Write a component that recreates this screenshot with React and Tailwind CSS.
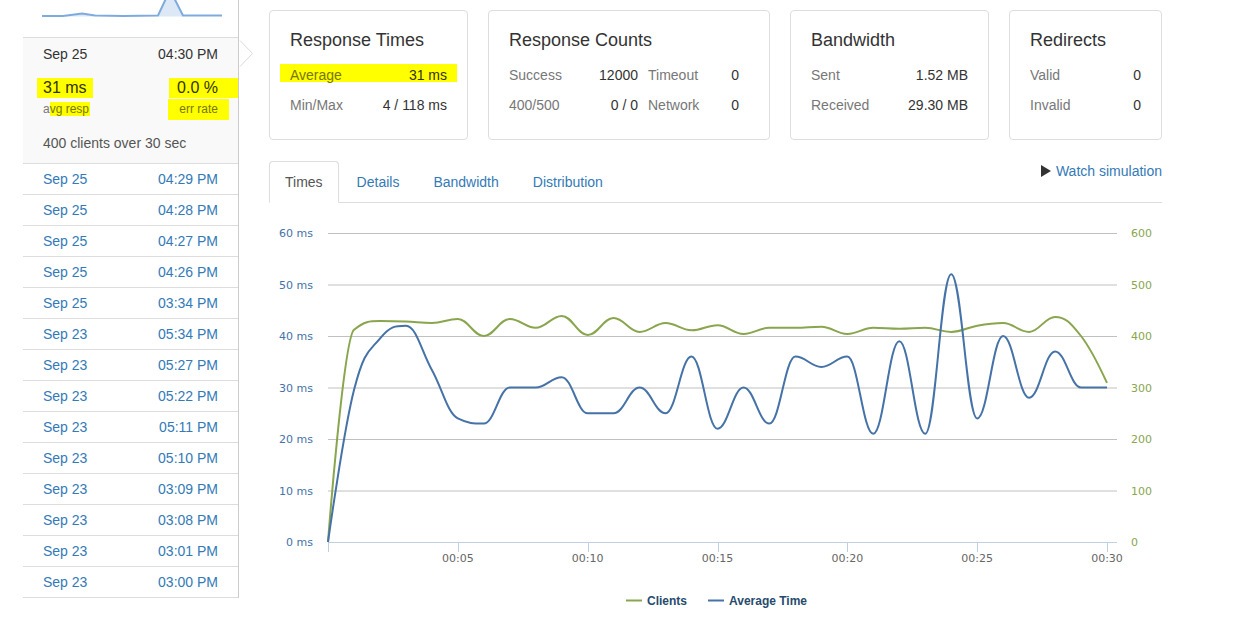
import React from "react";

// chart geometry (svg coords: page x - 269, page y - 203)
const X0 = 59;
const X1 = 838;
const Y0 = 339;
const Y60 = 30;
const px = (t) => X0 + (t * (X1 - X0)) / 30;
const pyMs = (ms) => Y0 - (ms * (Y0 - Y60)) / 60;
const pyClients = (v) => Y0 - (v * (Y0 - Y60)) / 600;

const avgTime = [0, 29.5, 39.5, 42, 33.4, 24, 23, 30, 30, 32, 25, 25, 30, 25, 36, 22, 30, 23, 36, 34, 36, 21, 39, 21, 52, 24, 40, 28, 37, 30, 30];
const clients = [0, 412, 429, 428, 425, 433, 400, 433, 416, 439, 402, 435, 408, 425, 411, 421, 404, 416, 416, 418, 404, 416, 414, 416, 408, 420, 425, 408, 437, 400, 309];

// highcharts-style spline
function spline(pts) {
  const sm = 1.5;
  const den = 2.5;
  const last = pts.length - 1;
  const conts = pts.map((p, i) => {
    if (i === 0 || i === last) return null;
    const [x, y] = p;
    const [lx, ly] = pts[i - 1];
    const [nx, ny] = pts[i + 1];
    const lcx = (sm * x + lx) / den;
    let lcy = (sm * y + ly) / den;
    const rcx = (sm * x + nx) / den;
    let rcy = (sm * y + ny) / den;
    const corr = ((rcy - lcy) * (rcx - x)) / (rcx - lcx) + y - rcy;
    lcy += corr;
    rcy += corr;
    if (lcy > ly && lcy > y) {
      lcy = Math.max(ly, y);
      rcy = 2 * y - lcy;
    } else if (lcy < ly && lcy < y) {
      lcy = Math.min(ly, y);
      rcy = 2 * y - lcy;
    }
    if (rcy > ny && rcy > y) {
      rcy = Math.max(ny, y);
      lcy = 2 * y - rcy;
    } else if (rcy < ny && rcy < y) {
      rcy = Math.min(ny, y);
      lcy = 2 * y - rcy;
    }
    return { lcx, lcy, rcx, rcy };
  });
  let d = `M${pts[0][0]},${pts[0][1]}`;
  for (let i = 1; i <= last; i++) {
    const prev = conts[i - 1];
    const cur = conts[i];
    const c1 = prev ? [prev.rcx, prev.rcy] : pts[i - 1];
    const c2 = cur ? [cur.lcx, cur.lcy] : pts[i];
    d += ` C${c1[0].toFixed(1)},${c1[1].toFixed(1)} ${c2[0].toFixed(1)},${c2[1].toFixed(1)} ${pts[i][0].toFixed(1)},${pts[i][1].toFixed(1)}`;
  }
  return d;
}

const runs = [
  ["Sep 25", "04:29 PM"],
  ["Sep 25", "04:28 PM"],
  ["Sep 25", "04:27 PM"],
  ["Sep 25", "04:26 PM"],
  ["Sep 25", "03:34 PM"],
  ["Sep 23", "05:34 PM"],
  ["Sep 23", "05:27 PM"],
  ["Sep 23", "05:22 PM"],
  ["Sep 23", "05:11 PM"],
  ["Sep 23", "05:10 PM"],
  ["Sep 23", "03:09 PM"],
  ["Sep 23", "03:08 PM"],
  ["Sep 23", "03:01 PM"],
  ["Sep 23", "03:00 PM"],
];

const Card = ({ title, width, children }) => (
  <div className={`${width} h-[130px] border border-[#ddd] rounded-[4px] bg-white pt-[19px] px-[20px]`}>
    <div className="text-[18px] leading-[20px] text-[#333] mb-[10px]">{title}</div>
    {children}
  </div>
);

const Row = ({ label, value, highlight }) => (
  <div
    className={`h-[30px] flex items-center justify-between ${
      highlight ? "relative" : ""
    }`}
  >
    {highlight && <div className="absolute -left-[10px] -right-[10px] top-[4px] h-[18px] bg-[#ffff00]" />}
    <span className={`relative ${highlight ? "text-[#777700]" : "text-[#777]"}`}>{label}</span>
    <span className={`relative ${highlight ? "text-[#333300]" : "text-[#333]"}`}>{value}</span>
  </div>
);

const Sparkline = () => (
  <svg width="215" height="37" className="block">
    <path
      d="M19,16.5 L40,16.5 L59,14 L72,16.5 L135,16.5 L147,-10 L160,16.5 L199,16.5 Z"
      fill="#dce8f6"
    />
    <path
      d="M19,16 L40,16 L59,13.5 L72,15.5 L100,16 L135,15.5 L147,-10 L160,15.5 L199,15.5"
      fill="none"
      stroke="#7eabdd"
      strokeWidth="2"
    />
  </svg>
);

const Chart = () => {
  const bluePts = avgTime.map((v, i) => [px(i), pyMs(v)]);
  const greenPts = clients.map((v, i) => [px(i), pyClients(v)]);
  const grid = [10, 20, 30, 40, 50, 60];
  return (
    <svg width="893" height="425" className="block" style={{ fontFamily: "'DejaVu Sans', Verdana, sans-serif" }}>
      {grid.map((g) => (
        <line key={g} x1={X0} x2={848} y1={pyMs(g) + 0.5} y2={pyMs(g) + 0.5} stroke="#c0c0c0" strokeWidth="1" />
      ))}
      <line x1={X0} x2={848} y1={Y0 + 0.5} y2={Y0 + 0.5} stroke="#c0d0e0" strokeWidth="1" />
      {[0, 5, 10, 15, 20, 25, 30].map((t) => (
        <line key={t} x1={Math.round(px(t)) + 0.5} x2={Math.round(px(t)) + 0.5} y1={Y0} y2={Y0 + 10} stroke="#c0d0e0" strokeWidth="1" />
      ))}
      {[0, 10, 20, 30, 40, 50, 60].map((g) => (
        <text key={g} x={44} y={pyMs(g) + 4} textAnchor="end" fontSize="11" fill="#4572a7">
          {g} ms
        </text>
      ))}
      {[0, 100, 200, 300, 400, 500, 600].map((g) => (
        <text key={g} x={862} y={pyClients(g) + 4} fontSize="11" fill="#89a54e">
          {g}
        </text>
      ))}
      {[5, 10, 15, 20, 25, 30].map((t) => (
        <text key={t} x={px(t)} y={359} textAnchor="middle" fontSize="11" fill="#666">
          00:{String(t).padStart(2, "0")}
        </text>
      ))}
      <path d={spline(greenPts)} fill="none" stroke="#89a54e" strokeWidth="2" strokeLinejoin="round" />
      <path d={spline(bluePts)} fill="none" stroke="#4572a7" strokeWidth="2" strokeLinejoin="round" />
      {/* legend */}
      <g style={{ fontFamily: "'Liberation Sans', Arial, sans-serif" }} fontSize="12" fontWeight="bold" fill="#274b6d">
        <line x1="357" x2="373" y1="397.5" y2="397.5" stroke="#89a54e" strokeWidth="2" />
        <text x="378" y="402">Clients</text>
        <line x1="439" x2="455" y1="397.5" y2="397.5" stroke="#4572a7" strokeWidth="2" />
        <text x="460" y="402">Average Time</text>
      </g>
    </svg>
  );
};

export default function App() {
  return (
    <div className="min-h-screen bg-white flex items-start font-['Liberation_Sans',Arial,sans-serif] text-[14px] text-[#333]">
      {/* run list */}
      <aside className="ml-[23px] w-[216px] shrink-0 border-r border-[#ccc]">
        <div className="h-[37px] overflow-hidden">
          <Sparkline />
        </div>
        <div className="relative h-[126px] bg-[#f9f9f9] border-t border-[#ddd] px-[20px] pt-[6px]">
          <svg width="15" height="28" className="absolute left-[216px] top-[2px]">
            <polyline points="1,0.5 13.5,13.5 1,26.5" fill="white" stroke="#dadada" strokeWidth="1" />
          </svg>
          <div className="flex justify-between leading-[20px]">
            <span>Sep 25</span>
            <span>04:30 PM</span>
          </div>
          <div className="flex justify-between mt-[14px] text-[16px] leading-[20px]">
            <span className="bg-[#ffff00] -ml-[6px] pl-[6px] pr-[6px] text-[#333300]">31 ms</span>
            <span className="bg-[#ffff00] pl-[8px] -mr-[20px] pr-[20px] text-[#333300]">0.0 %</span>
          </div>
          <div className="flex justify-between mt-[3px] text-[12px] leading-[16px] text-[#777]">
            <span>
              a<span className="bg-[#ffff00] pr-[1px] text-[#777700]">vg resp</span>
            </span>
            <span className="bg-[#ffff00] -mr-[11px] pl-[11px] pr-[11px] pt-[2px] pb-[3px] -mt-[2px] text-[#777700]">err rate</span>
          </div>
          <div className="mt-[13px] leading-[20px] text-[#555]">400 clients over 30 sec</div>
        </div>
        {runs.map(([d, t], i) => (
          <div
            key={i}
            className={`h-[31px] border-t border-[#ddd] px-[20px] flex items-center justify-between leading-[30px] text-[#337ab7] ${
              i === runs.length - 1 ? "border-b h-[32px]" : ""
            }`}
          >
            <span>{d}</span>
            <span>{t}</span>
          </div>
        ))}
      </aside>

      {/* main */}
      <main className="ml-[30px] w-[893px] shrink-0 pt-[10px]">
        <div className="flex gap-[20px]">
          <Card title="Response Times" width="w-[199px]">
            <Row label="Average" value="31 ms" highlight />
            <Row label="Min/Max" value="4 / 118 ms" />
          </Card>
          <Card title="Response Counts" width="w-[282px]">
            <div className="h-[30px] flex items-center">
              <div className="w-[129px] flex justify-between">
                <span className="text-[#777]">Success</span>
                <span>12000</span>
              </div>
              <div className="ml-[10px] w-[91px] flex justify-between">
                <span className="text-[#777]">Timeout</span>
                <span>0</span>
              </div>
            </div>
            <div className="h-[30px] flex items-center">
              <div className="w-[129px] flex justify-between">
                <span className="text-[#777]">400/500</span>
                <span>0 / 0</span>
              </div>
              <div className="ml-[10px] w-[91px] flex justify-between">
                <span className="text-[#777]">Network</span>
                <span>0</span>
              </div>
            </div>
          </Card>
          <Card title="Bandwidth" width="w-[199px]">
            <Row label="Sent" value="1.52 MB" />
            <Row label="Received" value="29.30 MB" />
          </Card>
          <Card title="Redirects" width="w-[153px]">
            <Row label="Valid" value="0" />
            <Row label="Invalid" value="0" />
          </Card>
        </div>

        <div className="relative mt-[21px]">
          <a className="absolute right-0 top-0 flex items-center leading-[20px] text-[#337ab7] cursor-pointer">
            <svg width="10" height="12" className="mr-[5px]">
              <polygon points="0,0 10,6 0,12" fill="#333" />
            </svg>
            Watch simulation
          </a>
          <ul className="flex border-b border-[#ddd]">
            {["Times", "Details", "Bandwidth", "Distribution"].map((t, i) => (
              <li key={t} className="-mb-[1px] mr-[2px]">
                <a
                  className={`block px-[15px] py-[10px] leading-[20px] border rounded-t-[4px] ${
                    i === 0
                      ? "border-[#ddd] border-b-transparent bg-white text-[#555]"
                      : "border-transparent text-[#337ab7]"
                  }`}
                >
                  {t}
                </a>
              </li>
            ))}
          </ul>
          <Chart />
        </div>
      </main>
    </div>
  );
}
